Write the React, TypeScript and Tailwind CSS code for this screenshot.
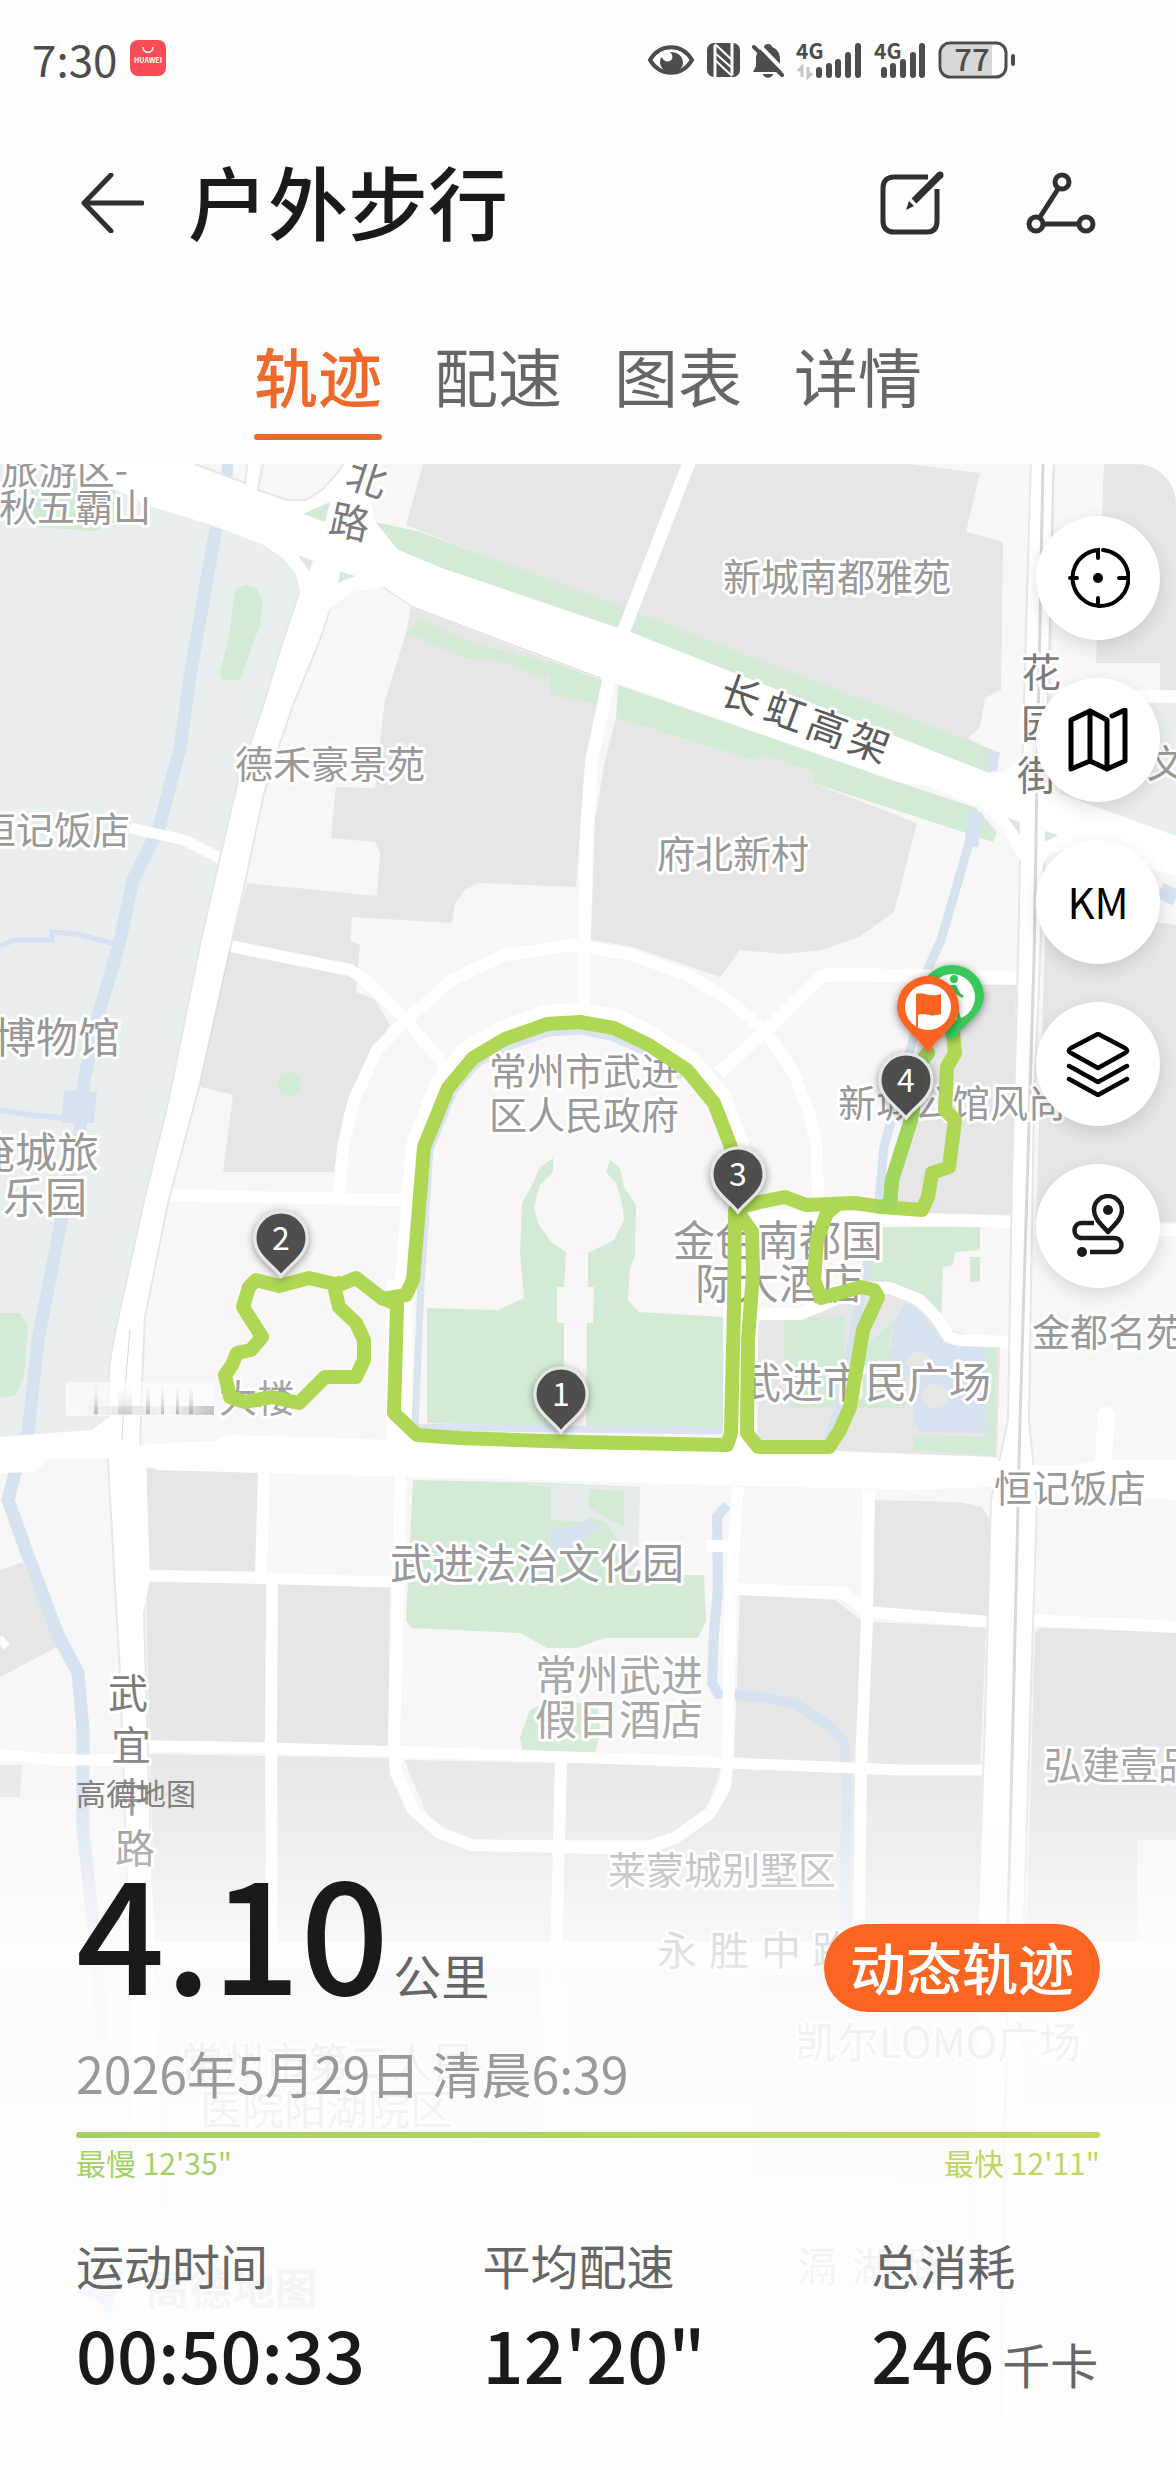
import React, { useState } from 'react'

const TABS = ['轨迹', '配速', '图表', '详情']

const STATS = [
  { label: '运动时间', value: '00:50:33', unit: '' },
  { label: '平均配速', value: '12\'20"', unit: '' },
  { label: '总消耗', value: '246', unit: '千卡' },
]

type Place = { t: string; x: number; y: number; s?: number; c?: string; a?: 'start' | 'middle' | 'end'; r?: number }

const PLACES: Place[] = [
  { t: '旅游区-', x: 128, y: 470, a: 'end' },
  { t: '秋五霸山', x: 151, y: 507, a: 'end' },
  { t: '新城南都雅苑', x: 837, y: 577 },
  { t: '德禾豪景苑', x: 330, y: 764 },
  { t: '恒记饭店', x: 130, y: 830, a: 'end' },
  { t: '府北新村', x: 733, y: 854 },
  { t: '文', x: 1166, y: 763 },
  { t: '博物馆', x: 120, y: 1037, s: 42, a: 'end' },
  { t: '淹城旅', x: 99, y: 1152, s: 42, a: 'end' },
  { t: '乐园', x: 87, y: 1197, s: 42, a: 'end' },
  { t: '常州市武进', x: 584, y: 1071 },
  { t: '区人民政府', x: 584, y: 1115 },
  { t: '新城公馆风尚', x: 838, y: 1103, a: 'start' },
  { t: '金色南都国', x: 778, y: 1240, s: 42 },
  { t: '际大酒店', x: 779, y: 1283, s: 42 },
  { t: '金都名苑', x: 1032, y: 1332, a: 'start' },
  { t: '武进市民广场', x: 865, y: 1382, s: 42 },
  { t: '大楼', x: 257, y: 1398, c: '#a3a3a3' },
  { t: '恒记饭店', x: 1070, y: 1488 },
  { t: '武进法治文化园', x: 537, y: 1563, s: 42 },
  { t: '常州武进', x: 619, y: 1675, s: 42, c: '#a8a8a8' },
  { t: '假日酒店', x: 619, y: 1719, s: 42, c: '#a8a8a8' },
  { t: '弘建壹品', x: 1044, y: 1765, a: 'start' },
  { t: '莱蒙城别墅区', x: 722, y: 1870, c: '#9a9a9a' },
  { t: '凯尔LOMO广场', x: 938, y: 2042, s: 42 },
  { t: '常州市第二人民', x: 328, y: 2062, s: 42 },
  { t: '医院阳湖院区', x: 326, y: 2109, s: 42 },
]

// street names are set one character at a time along the road
const STREETS: Place[] = [
  { t: '北', x: 367, y: 478, r: 18 },
  { t: '路', x: 350, y: 522, r: 12 },
  { t: '长', x: 741, y: 695, r: 20, c: '#5c5c5c' },
  { t: '虹', x: 785, y: 712, r: 20, c: '#5c5c5c' },
  { t: '高', x: 827, y: 728, r: 20, c: '#5c5c5c' },
  { t: '架', x: 869, y: 743, r: 20, c: '#5c5c5c' },
  { t: '花', x: 1041, y: 672 },
  { t: '园', x: 1041, y: 723 },
  { t: '街', x: 1037, y: 775 },
  { t: '武', x: 128, y: 1693 },
  { t: '宜', x: 131, y: 1745 },
  { t: '中', x: 132, y: 1797 },
  { t: '路', x: 135, y: 1848 },
  { t: '永', x: 677, y: 1950 },
  { t: '胜', x: 729, y: 1950 },
  { t: '中', x: 781, y: 1950 },
  { t: '路', x: 832, y: 1950 },
  { t: '滆', x: 817, y: 2266 },
  { t: '湖', x: 872, y: 2266 },
  { t: '路', x: 927, y: 2266 },
]

const GREY = [
  '423,464 909,464 980,473 966,532 1003,542 1001,690 985,698 980,727 968,738 995,752 600,600 406,525',
  '411,607 600,680 597,705 585,760 576,887 478,883 465,890 455,903 452,923 352,917 350,940 360,945 356,992 375,1000 390,1025 360,1073 344,1113 334,1172 223,1172 233,1095 201,1087 231,945 247,883 377,896 380,853 375,842 331,838 336,787 375,788 385,700 406,633',
  '616,718 752,760 763,755 813,772 813,783 917,823 894,912 859,937 821,950 783,954 739,950 733,960 720,977 691,967 633,947 591,940 595,820 605,760',
  '1104,464 1176,464 1176,690 1160,690 1160,663 1096,663',
  '928,985 1016,985 1012,1215 888,1212 900,1150',
  '1046,905 1176,925 1176,1222 1036,1222',
  '760,1317 860,1300 890,1285 941,1327 1000,1345 997,1457 745,1447',
  '147,1468 258,1473 256,1571 143,1570',
  '146,1582 390,1586 388,1746 149,1740',
  '150,1754 390,1758 396,1773 413,1810 440,1833 471,1845 645,1848 675,1838 710,1813 727,1767 982,1772 978,1942 155,1942',
  '404,1760 722,1766 706,1812 670,1840 471,1840 430,1822',
  '874,1500 959,1502 982,1507 990,1520 988,1617 873,1610',
  '740,1595 835,1600 861,1620 858,1765 734,1762',
  '871,1622 986,1627 980,1770 866,1768',
  '1035,1633 1040,1628 1176,1631 1176,1840 1137,1840 1137,1942 1026,1942',
  '0,1570 23,1562 57,1647 0,1677',
  '0,1765 22,1765 20,1797 0,1797',
  '170,1970 540,1970 545,2130 160,2100',
  '760,1975 980,1975 975,2180 755,2170',
]

const GREEN = [
  '375,522 421,532 600,598 1001,753 990,774 630,632 444,569 398,550',
  '421,619 465,640 545,662 551,669 545,679 497,660 465,658 406,633',
  '548,660 602,680 597,704 550,694',
  '618,685 901,783 976,808 997,832 993,842 966,833 813,783 813,772 763,755 752,760 616,718',
  '235,590 245,585 257,588 263,602 260,625 240,680 222,680 220,673 229,635',
  '30,480 115,476 115,522 95,531 36,527',
  '0,1313 20,1313 28,1325 24,1375 16,1395 0,1398',
  '427,1308 498,1310 524,1298 520,1253 522,1203 532,1185 540,1167 553,1158 553,1172 540,1185 534,1207 538,1223 551,1242 566,1252 564,1287 557,1287 557,1323 564,1323 564,1427 427,1423',
  '588,1253 614,1240 624,1220 622,1203 616,1183 606,1172 610,1160 620,1168 624,1187 636,1205 635,1257 630,1268 628,1300 639,1312 723,1317 723,1433 586,1428 587,1323 593,1323 594,1287 588,1287',
  '884,1227 980,1227 980,1250 955,1252 953,1265 943,1267 941,1327 920,1300 890,1285 861,1287 865,1260',
  '970,1257 980,1257 980,1282 970,1282',
  '785,1317 845,1317 844,1407 790,1408 783,1340',
  '895,1318 888,1345 905,1365 905,1408 852,1408 862,1350',
  '985,1347 997,1347 995,1456 913,1450 913,1437 985,1436',
  '413,1480 551,1483 636,1487 636,1575 704,1575 706,1620 698,1638 605,1638 576,1648 547,1648 520,1633 411,1628 406,1620',
  '530,1710 545,1703 598,1703 600,1735 595,1753 522,1750 520,1737',
]

const ROADS: [string, number][] = [
  ['130,828 184,840 220,858', 11],
  ['690,460 624,630 609,680 592,760 587,827 584,940 584,1020', 13],
  ['254,464 250,490', 12],
  ['339,1197 343,1147 354,1100 377,1050 406,1020 452,980 505,955 574,945 633,955 691,977 729,1000 767,1033 794,1073 809,1113 817,1147 818,1205', 12],
  ['225,945 350,970 363,978 406,1020 448,1070', 12],
  ['719,1073 763,1033 821,977 832,974 1020,978', 13],
  ['160,1195 410,1200', 12],
  ['738,1214 882,1218 1016,1222', 12],
  ['1036,1228 1176,1230', 12],
  ['1060,693 1176,697', 12],
  ['723,1314 800,1314 825,1304 861,1287 890,1288 920,1300 936,1317 949,1337 959,1340 1016,1342', 12],
  ['1106,1415 1103,1470', 17],
  ['264,1473 261,1573', 12],
  ['272,1583 271,1740 272,1942', 12],
  ['401,1440 400,1480 398,1580 394,1747 396,1773 413,1810 440,1833 471,1845 600,1848 645,1848 675,1838 710,1813 725,1787 727,1767 731,1587 738,1487', 12],
  ['404,1480 400,1640', 5],
  ['135,1575 394,1582', 11],
  ['706,1546 735,1546', 12],
  ['735,1589 844,1593 867,1612 989,1622', 12],
  ['1030,1620 1176,1627', 12],
  ['0,1755 60,1760 127,1760', 11],
  ['146,1748 153,1746 268,1748 600,1758 729,1763 901,1770 982,1770', 11],
  ['561,1760 557,1920 552,2300', 12],
  ['869,1490 867,1620 861,1767 859,1942', 12],
  ['0,1645 6,1640', 12],
]

const WATER: [string, number][] = [
  ['228,460 227,476', 11],
  ['216,528 191,670 180,748 159,828 133,880 119,945 98,1016 84,1080 80,1130 62,1217 54,1258 38,1340 28,1433 15,1473 8,1500 26,1550 58,1635 78,1673 83,1730 83,1830 93,1920 105,2060', 13],
  ['0,946 15,940 52,940 52,932 77,934 116,944', 5],
  ['0,1110 30,1115 66,1118', 6],
  ['976,812 971,846', 14],
  ['970,840 941,940 924,977 913,1040 884,1147 878,1210 866,1270 858,1310 840,1407 828,1440', 9],
  ['994,752 992,771', 10],
  ['727,1505 717,1517 718,1587 714,1633 712,1683 718,1694 760,1697 794,1703 825,1723 844,1742 847,1787 844,1942', 10],
  ['1160,890 1176,898', 16],
]

const ROUTE = [
  '738,1212 731,1147 714,1103 687,1070 649,1045 614,1028 580,1022 547,1024 505,1039 473,1058 448,1088 424,1147 413,1280 406,1295 383,1299 356,1278 339,1285 309,1278 279,1286 256,1280 249,1287 243,1307 262,1337 251,1350 237,1353 232,1365 225,1375 230,1397 245,1402 272,1397 299,1403 325,1377 356,1377 364,1360 364,1340 356,1323 339,1307 335,1290 339,1283',
  '383,1298 397,1305 394,1413 417,1435 459,1438 576,1442 727,1445 731,1433 734,1307 735,1210',
  '738,1212 752,1232 753,1273 748,1340 747,1433 758,1447 829,1447 840,1430 850,1407 863,1330 878,1297 874,1290 861,1287 821,1298 814,1280 817,1240 827,1213 838,1204',
  '738,1208 760,1202 785,1197 806,1205 855,1203 882,1207 922,1210 928,1197 932,1173 949,1167 955,1120 945,1110 947,1067 955,1053 953,1033',
  '880,1207 890,1205 892,1180 911,1120 920,1063 928,1053',
]

const ARCH = '403,1300 407,1280 418,1146 442,1084 468,1053 502,1033 545,1017 580,1015 616,1021 652,1039 692,1065 720,1100 737,1145 744,1212'

const MARKERS = [
  { n: 1, x: 561, y: 1432 },
  { n: 2, x: 281, y: 1276 },
  { n: 3, x: 738, y: 1212 },
  { n: 4, x: 906, y: 1118 },
]

function Label({ p }: { p: Place }) {
  return (
    <text
      x={p.x}
      y={p.y}
      dy="0.37em"
      fontSize={p.s ?? 38}
      fill={p.c ?? '#999999'}
      textAnchor={p.a ?? 'middle'}
      transform={p.r ? `rotate(${p.r} ${p.x} ${p.y})` : undefined}
      stroke="#fff"
      strokeWidth="6"
      strokeLinejoin="round"
      paintOrder="stroke"
    >
      {p.t}
    </text>
  )
}

function TrackMap() {
  return (
    <svg viewBox="0 464 1176 2016" preserveAspectRatio="xMidYMin slice" className="absolute inset-0 h-full w-full" aria-label="轨迹地图">
      <defs>
        <linearGradient id="fade" x1="0" y1="1720" x2="0" y2="2480" gradientUnits="userSpaceOnUse">
          <stop offset="0" stopColor="#fdfdfe" stopOpacity="0" />
          <stop offset="0.16" stopColor="#fdfdfe" stopOpacity="0.34" />
          <stop offset="0.28" stopColor="#fdfdfe" stopOpacity="0.74" />
          <stop offset="0.36" stopColor="#fdfdfe" stopOpacity="0.88" />
          <stop offset="1" stopColor="#fdfdfe" stopOpacity="0.96" />
        </linearGradient>
        <linearGradient id="smear" x1="66" y1="0" x2="214" y2="0" gradientUnits="userSpaceOnUse">
          <stop offset="0" stopColor="#fff" stopOpacity="0.5" />
          <stop offset="0.4" stopColor="#d9d9d9" />
          <stop offset="0.7" stopColor="#f4f4f4" />
          <stop offset="1" stopColor="#a8a8a8" />
        </linearGradient>
        <linearGradient id="streak" x1="0" y1="1382" x2="0" y2="1416" gradientUnits="userSpaceOnUse">
          <stop offset="0" stopColor="#fff" stopOpacity="0.2" />
          <stop offset="1" stopColor="#9a9a9a" />
        </linearGradient>
        <filter id="soft" x="-50%" y="-50%" width="200%" height="200%">
          <feDropShadow dx="0" dy="2" stdDeviation="4" floodColor="#000" floodOpacity="0.45" />
        </filter>
      </defs>

      <rect x="0" y="464" width="1176" height="2016" fill="#f8f6f7" />
      <polygon fill="#e9efee" points="0,464 60,464 153,507 212,525 264,545 283,558 297,575 300,593 281,647 264,703 239,777 220,857 199,950 168,1103 145,1197 115,1333 109,1367 108,1430 0,1440" />
      <polygon fill="#e9efee" points="1060,703 1176,703 1176,840 1060,795" />
      {GREY.map((d) => <polygon key={d} points={d} fill="#e6e6e6" />)}
      {GREEN.map((d) => <polygon key={d} points={d} fill="#d3ebd6" />)}
      <circle cx="289" cy="1084" r="12" fill="#d3ebd6" />

      {/* lakes and paved squares */}
      <polygon fill="#d6e2ef" points="64,1090 97,1092 94,1123 62,1123" />
      <polygon fill="#d6e2ef" points="905,1303 920,1310 943,1342 985,1345 987,1433 920,1432 913,1417 915,1380 890,1363 893,1325" />
      <ellipse cx="919" cy="1362" rx="12" ry="10" fill="#e6e6e6" />
      <ellipse cx="935" cy="1396" rx="13" ry="12" fill="#e6e6e6" />
      <polygon fill="#e6ebec" points="508,1483 640,1487 638,1575 620,1560 600,1525 590,1540 588,1522 551,1520 551,1487" />
      <polygon fill="#d3ebd6" points="589,1489 624,1491 624,1527 610,1520 589,1508" />
      <polygon fill="#d3ebd6" points="588,1517 606,1522 622,1546 590,1548 575,1540" />
      <polygon fill="#d6e2ef" points="549,1530 575,1526 590,1520 600,1527 586,1537 572,1556 552,1560" />
      {WATER.map(([d, w]) => <polyline key={d} points={d} fill="none" stroke="#d6e2ef" strokeWidth={w} />)}

      {/* roads */}
      <g fill="none" stroke="#fff" strokeLinejoin="round">
        {ROADS.map(([d, w]) => <polyline key={d} points={d} strokeWidth={w} strokeLinecap={w === 17 ? 'round' : 'butt'} />)}
        <polyline points={ARCH} strokeWidth="24" />
        <polyline points="399,1280 399,1440" strokeWidth="26" />
        <polyline points="742,1220 740,1450" strokeWidth="34" />
      </g>
      {/* moat inside the arch */}
      <g fill="none" stroke="#d9e4f0" strokeWidth="7">
        <polyline points="430,1150 421,1285 415,1427 722,1431" />
        <polyline points="430,1150 454,1091 478,1063 508,1047 549,1033 580,1031 611,1037 645,1052 682,1077" />
      </g>
      <g fill="#fff" stroke="#e3e8e8" strokeWidth="2">
        <polygon points="300,590 281,647 264,703 239,777 220,857 199,950 168,1103 145,1197 115,1333 109,1367 108,1460 115,1587 120,1673 124,1787 128,1920 134,2480 170,2480 155,1920 151,1853 147,1720 143,1577 140,1463 141,1407 145,1317 168,1203 199,1087 231,945 245,883 264,793 281,740 295,700 320,640 331,607" />
        <polygon points="1031,460 1054,460 1048,780 1040,960 1034,1100 1029,1420 1037,1500 1030,1720 1024,1920 1015,2490 972,2490 978,1920 985,1720 991,1500 1008,1420 1012,1180 1018,960 1020,860 1024,700" />
      </g>
      <g fill="#fff">
        <polygon points="60,464 190,464 245,483 287,501 306,501 322,491 340,471 350,458 372,458 369,490 375,522 398,550 444,569 630,632 989,773 1003,772 1022,758 1030,772 1058,793 1176,836 1176,876 1150,868 1090,845 1050,853 1040,868 1020,860 1004,832 982,808 924,785 901,783 600,677 413,607 400,600 383,587 352,592 331,607 320,625 296,620 300,593 297,575 283,558 264,545 212,525 153,507" />
        <polygon points="0,1437 50,1433 92,1430 112,1415 140,1445 214,1441 230,1435 398,1440 576,1448 844,1452 989,1457 1010,1465 1073,1465 1100,1460 1176,1460 1176,1500 989,1487 913,1490 600,1482 157,1470 142,1462 107,1458 50,1459 34,1472 0,1473" />
        <polygon points="118,1460 146,1460 150,1580 124,1700" />
        <rect x="0" y="1942" width="1176" height="22" />
      </g>
      <polygon fill="#f8f6f7" stroke="#e3e8e8" strokeWidth="2" points="264,460 258,490 287,500 306,500 322,490 340,470 345,460" />
      <polyline points="248,460 245,483 195,464" fill="none" stroke="#e3e8e8" strokeWidth="2" />
      <polygon points="303,514 330,502 325,522" fill="#d3ebd6" />
      <g fill="#dbe7e4">
        <polygon points="298,555 313,561 309,571" />
        <polygon points="340,571 355,576 338,583" />
        <polygon points="1007,817 1020,822 1020,835" />
        <polygon points="1045,831 1058,835 1045,842" />
      </g>
      <g fill="none" stroke="#d5d9d9" strokeWidth="3">
        <polyline points="1043,464 1037,780 1034,960 1020,1420 1013,1720 1008,1920 1000,2480" />
        <polyline points="1053,470 1046,780" strokeWidth="1" />
        <polyline points="230,950 200,1086" strokeWidth="1" />
        <polyline points="130,1330 124,1400 122,1440" strokeWidth="1" />
        <polyline points="383,587 413,607 600,678" strokeWidth="1" />
      </g>

      {PLACES.map((p) => <Label key={p.t + p.y} p={p} />)}
      {STREETS.map((p) => <Label key={p.t + p.y + p.x} p={{ s: 40, c: '#7c7c7c', ...p }} />)}

      {/* scratched-out building name */}
      <rect x="66" y="1382" width="148" height="34" fill="#fff" opacity="0.6" />
      <rect x="70" y="1406" width="144" height="9" fill="url(#smear)" opacity="0.7" />
      <g fill="url(#streak)" opacity="0.7">
        <rect x="94" y="1384" width="4" height="30" />
        <rect x="118" y="1386" width="14" height="28" opacity="0.5" />
        <rect x="146" y="1384" width="4" height="30" />
        <rect x="161" y="1384" width="3" height="30" />
        <rect x="176" y="1384" width="3" height="30" />
        <rect x="189" y="1384" width="4" height="30" />
      </g>

      <g fill="none" stroke="#aed754" strokeWidth="14" strokeLinejoin="round" strokeLinecap="round">
        {ROUTE.map((d) => <polyline key={d} points={d} />)}
        <polyline points={ROUTE[4]} stroke="#a0d65c" />
      </g>

      {/* start pin */}
      <g filter="url(#soft)">
        <path d="M952 1041c-10-16-32-26-32-45a32 31 0 0 1 64 0c0 19-22 29-32 45z" fill="#37c95a" />
        <circle cx="952" cy="997" r="23" fill="#fff" />
      </g>
      <g fill="#37c95a">
        <circle cx="954" cy="979" r="4" />
        <path d="M948 985h8l4 8 4 3-2 2-6-4 2 14 4 14-3 1-7-16-5 14-3-1 4-16z" />
      </g>

      {MARKERS.map((m) => (
        <g key={m.n}>
          <path
            d={`M${m.x} ${m.y}c-9-12-26-20-26-38a26 26 0 0 1 52 0c0 18-17 26-26 38z`}
            fill="#4b4b4b"
            fillOpacity="0.96"
            stroke="#e6e6e6"
            strokeWidth="3"
            filter="url(#soft)"
          />
          <text x={m.x} y={m.y - 26} fontSize="32" fill="#fff" textAnchor="middle">{m.n}</text>
        </g>
      ))}

      {/* finish pin */}
      <path d="M928 1053c-10-17-31-27-31-46a31 31 0 0 1 62 0c0 19-21 29-31 46z" fill="#fb6420" filter="url(#soft)" />
      <circle cx="928" cy="1007" r="23" fill="#fff" />
      <path d="M916 994c8-3 12 4 25 0v20c-13 4-15-2-23 1v14h-2z" fill="#fb6420" />

      {/* map provider mark */}
      <path d="M76 2292l48-22-14 46-10-14z" fill="#5fb4f5" />
      <text x="146" y="2305" fontSize="43" fontWeight="700" fill="#888">高德地图</text>

      <rect x="0" y="1720" width="1176" height="760" fill="url(#fade)" />
    </svg>
  )
}

function StatusBar() {
  return (
    <div className="flex h-[120px] items-center justify-between pl-8 pr-40 text-[#4d4d4d]">
      <div className="flex items-center gap-3 pb-1">
        <span className="text-[44px] leading-[56px]">7:30</span>
        <svg viewBox="0 0 36 36" className="size-9">
          <rect width="36" height="36" rx="8" fill="#fb4b55" />
          <path d="M13 7c0 7 10 7 10 0" fill="none" stroke="#fff" strokeWidth="1.5" />
          <text x="18" y="23" fontSize="7" fontWeight="700" fill="#fff" textAnchor="middle">HUAWEI</text>
        </svg>
      </div>
      <div className="flex items-center gap-3">
        <svg viewBox="0 0 48 32" className="h-8 w-12">
          <path d="M3 16C13-1 35-1 45 16 35 33 13 33 3 16z" fill="none" stroke="#4d4d4d" strokeWidth="4" />
          <path d="M23 8c8 0 13 4 13 11 0 5-5 9-12 9s-11-5-11-10c0-3 1-4 2-5 1 5 8 6 10 2 1-3 0-5-2-7z" fill="#4d4d4d" />
        </svg>
        <svg viewBox="0 0 33 34" className="h-[34px] w-[33px]">
          <rect width="33" height="34" rx="7" fill="#4d4d4d" />
          <path d="M8 34V2M25 0v32" stroke="#fdfdfd" strokeWidth="3" />
          <path d="M8 1l17 16M8 17l17 16M8 10l17 15" stroke="#fdfdfd" strokeWidth="2" />
        </svg>
        <svg viewBox="0 0 32 35" className="h-[35px] w-8">
          <path d="M16 1c2 0 4 1 4 3 6 2 8 7 8 13v7l3 5H1l3-6v-7c0-6 3-10 8-12 0-2 2-3 4-3z" fill="#4d4d4d" />
          <path d="M11 31h10c-1 5-9 5-10 0z" fill="#4d4d4d" />
          <path d="M5 0l28 29" stroke="#fdfdfd" strokeWidth="4" />
          <path d="M2 4l28 28" stroke="#4d4d4d" strokeWidth="4" strokeLinecap="round" />
        </svg>
        <svg viewBox="0 0 66 38" className="h-[38px] w-[66px] overflow-visible" fill="#4d4d4d">
          <text x="0" y="18" fontSize="21" fontWeight="700">4G</text>
          <path d="M2 30l4-4v10M12 26v10l4-4" fill="none" stroke="#c4c4c4" strokeWidth="3" />
          <rect x="20" y="26" width="6" height="11" rx="3" />
          <rect x="30" y="22" width="6" height="15" rx="3" />
          <rect x="39" y="18" width="6" height="19" rx="3" />
          <rect x="49" y="11" width="6" height="26" rx="3" />
          <rect x="59" y="2" width="6" height="35" rx="3" />
        </svg>
        <svg viewBox="0 0 52 38" className="h-[38px] w-[52px] overflow-visible" fill="#4d4d4d">
          <text x="0" y="18" fontSize="21" fontWeight="700">4G</text>
          <rect x="7" y="26" width="6" height="11" rx="3" />
          <rect x="16" y="22" width="6" height="15" rx="3" />
          <rect x="26" y="18" width="6" height="19" rx="3" />
          <rect x="36" y="11" width="6" height="26" rx="3" />
          <rect x="45" y="2" width="6" height="35" rx="3" />
        </svg>
        <svg viewBox="0 0 78 38" className="h-[38px] w-[78px] overflow-visible">
          <path d="M12 4h42v30H12c-5 0-8-3-8-8V12c0-5 3-8 8-8z" fill="#d8d8d8" />
          <rect x="2" y="2" width="66" height="34" rx="10" fill="none" stroke="#4d4d4d" strokeWidth="3" />
          <rect x="73" y="13" width="4" height="12" rx="2" fill="#4d4d4d" />
          <text x="34" y="30" fontSize="31" fontWeight="500" fill="#4d4d4d" textAnchor="middle">77</text>
        </svg>
      </div>
    </div>
  )
}

function Header() {
  return (
    <header className="flex h-[166px] items-center px-20">
      <button aria-label="返回">
        <svg viewBox="0 0 64 60" className="h-[60px] w-16" fill="none" stroke="#303030" strokeWidth="5" strokeLinecap="round" strokeLinejoin="round">
          <path d="M62 30H4M31 2L4 30l27 28" />
        </svg>
      </button>
      <h1 className="ml-11 pb-2 text-[80px] font-medium leading-[100px] text-[#1a1a1a]">户外步行</h1>
      <button aria-label="编辑" className="ml-auto">
        <svg viewBox="0 0 66 66" className="size-[66px] overflow-visible">
          <path d="M48 7H14C7 7 3 11 3 18v33c0 7 4 11 11 11h33c7 0 10-4 10-11V19" fill="none" stroke="#303030" strokeWidth="5" />
          <path d="M34 31L60 5" stroke="#303030" strokeWidth="7" />
          <circle cx="60" cy="5" r="3.5" fill="#303030" />
          <path d="M29 31l5 5-8 4z" fill="#303030" />
        </svg>
      </button>
      <button aria-label="分享" className="ml-20">
        <svg viewBox="0 0 70 62" className="h-[62px] w-[70px]" fill="none" stroke="#303030" strokeWidth="5">
          <circle cx="36" cy="10" r="7" />
          <circle cx="10" cy="52" r="7" />
          <circle cx="60" cy="52" r="7" />
          <path d="M32 17L14 45M17 52h36" />
        </svg>
      </button>
    </header>
  )
}

const CIRCLE = 'flex size-[124px] items-center justify-center rounded-full bg-white shadow-[0_6px_18px_rgba(0,0,0,0.12)]'

function MapTools() {
  return (
    <div className="flex flex-col items-center gap-[38px]">
      <button aria-label="定位" className={CIRCLE}>
        <svg viewBox="0 0 64 64" className="size-16" fill="none" stroke="#000" strokeWidth="4" strokeLinecap="round">
          <path d="M37 4A28 28 0 1 1 32 4v8M32 60v-8M4 32h7M60 32h-7" />
          <circle cx="32" cy="32" r="5" fill="#000" stroke="none" />
        </svg>
      </button>
      <button aria-label="地图" className={CIRCLE}>
        <svg viewBox="0 0 64 64" className="size-16" fill="none" stroke="#000" strokeWidth="5" strokeLinejoin="round" strokeLinecap="round">
          <path d="M5 12L24 3v50L5 61zM24 3l17 9v49l-17-8M46 8l13-6v51l-18 8" />
        </svg>
      </button>
      <button aria-label="公里标记" className={`${CIRCLE} pb-1 text-[42px] text-black`}>KM</button>
      <button aria-label="图层" className={CIRCLE}>
        <svg viewBox="0 0 64 66" className="h-[66px] w-16" fill="none" stroke="#000" strokeWidth="4.5" strokeLinejoin="round" strokeLinecap="round">
          <path d="M30 4L5 17c-3 2-3 3 0 5l27 15 27-15c3-2 3-3 0-5L34 4c-1-1-3-1-4 0zM3 35l29 16 29-16M3 48l29 16 29-16" />
        </svg>
      </button>
      <button aria-label="路线" className={CIRCLE}>
        <svg viewBox="0 0 52 64" className="h-16 w-[52px]" fill="none" stroke="#1a1a1a" strokeWidth="4.5">
          <path d="M36 38C30 31 22 25 22 16a14 14 0 0 1 28 0c0 9-8 15-14 22z" strokeLinejoin="round" />
          <circle cx="36" cy="16" r="5" fill="#1a1a1a" stroke="none" />
          <path d="M22 29H10c-10 0-10 15 0 15h32c10 0 10 14 0 14H18" />
          <circle cx="10" cy="58" r="5" fill="#1a1a1a" stroke="none" />
        </svg>
      </button>
    </div>
  )
}

function Summary() {
  return (
    <section className="mt-auto px-[76px] pb-[82px]">
      <p className="text-[30px] leading-[44px] text-[#808080]">高德地图</p>
      <div className="mt-7 flex items-end justify-between">
        <p className="flex items-baseline gap-1 text-[#1a1a1a]">
          <span className="text-[156px] font-medium leading-[170px]">4.10</span>
          <span className="text-[48px] leading-none text-[#666]">公里</span>
        </p>
        <button className="h-[88px] rounded-full bg-[#fb6522] px-[26px] pb-1 text-[56px] font-medium leading-none text-white">
          动态轨迹
        </button>
      </div>
      <p className="mt-8 text-[50px] leading-[56px] text-[#999]">2026年5月29日 清晨6:39</p>
      <div className="mt-8 h-[6px] rounded-full bg-linear-to-r from-[#a4d167] to-[#bfd662]" />
      <div className="mt-1 flex justify-between text-[30px] leading-10">
        <span className="text-[#a4d167]">最慢 12'35"</span>
        <span className="text-[#bfd662]">最快 12'11"</span>
      </div>
      <dl className="mt-[54px] grid grid-cols-[407fr_389fr_229fr]">
        {STATS.map((s) => (
          <div key={s.label} className="flex flex-col gap-4">
            <dt className="text-[48px] leading-[56px] text-[#666]">{s.label}</dt>
            <dd className="flex items-baseline gap-2 whitespace-nowrap text-[72px] font-medium leading-[90px] text-[#1a1a1a]">
              {s.value}
              {s.unit && <span className="text-[48px] font-normal leading-none text-[#666]">{s.unit}</span>}
            </dd>
          </div>
        ))}
      </dl>
    </section>
  )
}

export default function App() {
  const [tab, setTab] = useState(0)

  return (
    <div className="flex min-h-screen flex-col bg-[#fdfdfd] font-['Noto_Sans_CJK_SC',sans-serif]">
      <StatusBar />
      <Header />
      <nav role="tablist" className="flex justify-center gap-[52px] pb-6 pt-[50px]">
        {TABS.map((t, i) => (
          <button
            key={t}
            role="tab"
            aria-selected={tab === i}
            onClick={() => setTab(i)}
            className={`flex flex-col gap-[22px] text-[64px] leading-[76px] ${tab === i ? 'font-medium text-[#ee6a2c]' : 'text-[#666]'}`}
          >
            {t}
            <span className={`h-[6px] w-full rounded-full ${tab === i ? 'bg-[#ee6a2c]' : ''}`} />
          </button>
        ))}
      </nav>
      <main className="relative flex flex-1 flex-col overflow-hidden rounded-tr-[40px]">
        <TrackMap />
        <div className="relative flex flex-1 flex-col">
          <div className="flex justify-end px-4 pt-[52px]">
            <MapTools />
          </div>
          <Summary />
        </div>
      </main>
    </div>
  )
}
